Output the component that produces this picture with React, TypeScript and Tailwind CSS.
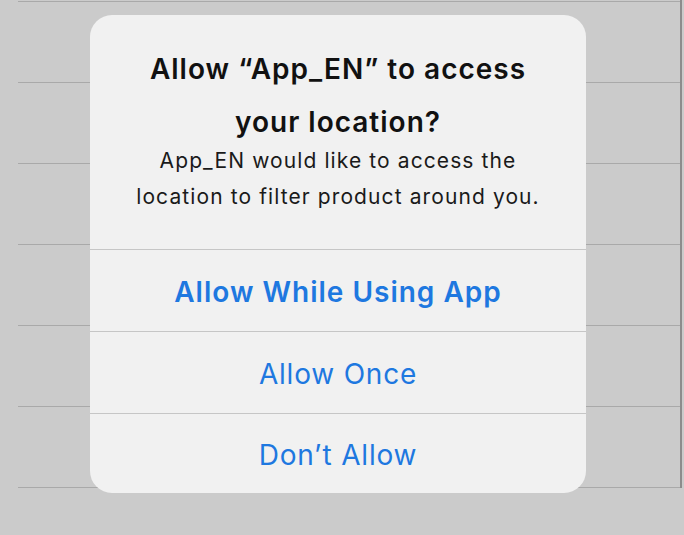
export default function App() {
  const rows = [0, 1, 2, 3, 4, 5];
  return (
    <div className="relative h-[535px] w-[684px] overflow-hidden bg-[#cbcbcb] font-['Inter',sans-serif]">
      {/* liste derrière la fenêtre */}
      <div className="ml-[18px] mr-[2px] border-r-2 border-[#8c8c8c] pt-[1px]">
        <div className="h-[1px] bg-[#a9a9a9]" />
        {rows.map((r) => (
          <div key={r} className="h-[81px] border-b border-[#a9a9a9]" />
        ))}
      </div>

      {/* alerte */}
      <div className="absolute left-[90px] top-[15px] flex w-[496px] flex-col overflow-hidden rounded-[22px] bg-[#f1f1f1]">
        <div className="px-4 pb-[34px] pt-[28px] text-center">
          <h1 className="text-[28px] font-semibold leading-[53px] tracking-[1px] text-[#111111]">
            Allow “App_EN” to access
            <br />
            your location?
          </h1>
          <p className="-mt-[6px] text-[21px] leading-[36px] tracking-[1.1px] text-[#1a1a1a]">
            App_EN would like to access the
            <br />
            location to filter product around you.
          </p>
        </div>
        <button className="h-[82px] border-t border-[#c6c6c6] pt-[3px] text-[28px] font-semibold tracking-[1px] text-[#1e78e0]">
          Allow While Using App
        </button>
        <button className="h-[82px] border-t border-[#c6c6c6] pt-[3px] text-[28px] tracking-[0.8px] text-[#1e78e0]">
          Allow Once
        </button>
        <button className="h-[80px] border-t border-[#c6c6c6] pt-[3px] text-[28px] tracking-[0.8px] text-[#1e78e0]">
          Don’t Allow
        </button>
      </div>
    </div>
  );
}
